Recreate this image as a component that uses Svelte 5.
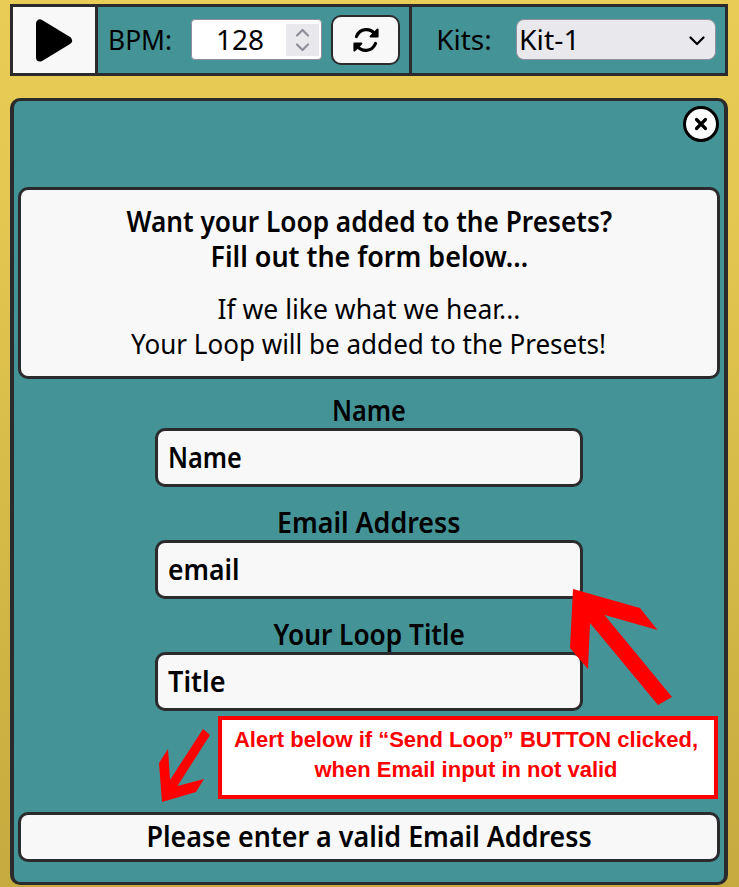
<script>
  const fields = [
    { label: 'Name', labelWidth: 74, value: 'Name', valueWidth: 74 },
    { label: 'Email Address', labelWidth: 183, value: 'email', valueWidth: 72 },
    { label: 'Your Loop Title', labelWidth: 191, value: 'Title', valueWidth: 58 }
  ];

  // Condenses a line of type horizontally to the given width.
  function fit(node, width) {
    node.style.transform = `scaleX(${width / node.offsetWidth})`;
  }
</script>

<main>
  <header>
    <button class="play" aria-label="Play">
      <svg width="82" height="66" viewBox="0 0 82 66"><path d="M27 16 V50 L55 33 Z" transform="translate(0 .5)" fill="#000" stroke="#000" stroke-width="8" stroke-linejoin="round" /></svg>
    </button>
    <div class="tempo">
      <div class="lab bpm"><span use:fit={64}>BPM:</span></div>
      <div class="number">
        <div class="digits"><span use:fit={48}>128</span></div>
        <div class="spin">
          <svg width="33" height="32" viewBox="0 0 33 32" fill="none" stroke="#8f8f9b" stroke-width="2.2" stroke-linecap="round" stroke-linejoin="round"><path d="M11 11.5 16.5 6 22 11.5M11 20.5 16.5 26 22 20.5" /></svg>
        </div>
      </div>
      <button class="reload" aria-label="Reset tempo">
        <svg width="28" height="26" viewBox="0 0 28 26" fill="none" stroke="#000" stroke-width="3.2" stroke-linecap="round" stroke-linejoin="round"><path d="M4.500 9.500C8 1 18 .5 23.500 7.500M23.500 16.500C20 25 10 25.500 4.500 18.500" /><path d="M25.600 2.500V9.500H18.600ZM2.400 23.500V16.500H9.400Z" fill="#000" stroke-width="2" /></svg>
      </button>
    </div>
    <div class="kits">
      <div class="lab"><span use:fit={56}>Kits:</span></div>
      <div class="select">
        <span use:fit={61}>Kit-1</span>
        <svg width="16" height="10" viewBox="0 0 16 10" fill="none" stroke="#000" stroke-width="2.2" stroke-linecap="round" stroke-linejoin="round"><path d="M1.500 1.500 8 8 14.500 1.500" /></svg>
      </div>
    </div>
  </header>

  <section class="panel">
    <button class="close" aria-label="Close">
      <svg width="14" height="14" viewBox="0 0 14 14" stroke="#000" stroke-width="3.2" stroke-linecap="round"><path d="M2.500 2.500 11.500 11.500M11.500 2.500 2.500 11.500" /></svg>
    </button>
    <div class="info">
      <h2><span use:fit={485}>Want your Loop added to the Presets?</span><span use:fit={318}>Fill out the form below...</span></h2>
      <p><span use:fit={303}>If we like what we hear...</span><span use:fit={475}>Your Loop will be added to the Presets!</span></p>
    </div>
    <form>
      {#each fields as f}
        <div class="field">
          <div class="label"><span use:fit={f.labelWidth}>{f.label}</span></div>
          <div class="input"><span use:fit={f.valueWidth}>{f.value}</span></div>
        </div>
      {/each}
    </form>
    <div class="alert"><span use:fit={445}>Please enter a valid Email Address</span></div>
  </section>

  <aside class="note">
    <div><span use:fit={464}>Alert below if “Send Loop” BUTTON clicked,</span></div>
    <div><span use:fit={303}>when Email input in not valid</span></div>
  </aside>
  <svg class="arrows" width="739" height="887" viewBox="0 0 739 887" fill="#f00">
    <path d="M573 589 640 608 657.500 630 604.500 615 672 697 658 705 590 623 588 669 570 648Z" />
    <path d="M203 729 210 735 177.500 786 204 779 196 792 162 802 159 763 168 749 170 780Z" />
  </svg>
</main>

<style>
  :global(body) { margin: 0; }
  * { box-sizing: border-box; }
  main {
    position: relative;
    width: 739px;
    height: 887px;
    overflow: hidden;
    padding: 4px 11px 0 10px;
    background: linear-gradient(#e9cc55, #e5c852 20%, #c5ab3d);
    font: 28px/35px "Noto Sans", sans-serif;
    color: #000;
  }
  span { display: inline-block; white-space: nowrap; }
  svg { display: block; }
  button { padding: 0; display: flex; align-items: center; justify-content: center; }
  header {
    display: flex;
    height: 72px;
    border: 3px solid #2b2b2e;
    background: #449497;
  }
  .play { width: 85px; height: 66px; border: 0; border-right: 3px solid #2b2b2e; background: #f8f8f8; }
  .tempo { display: flex; align-items: center; width: 314px; padding-bottom: 1px; border-right: 3px solid #2b2b2e; }
  .lab { display: flex; justify-content: center; width: 54px; padding-bottom: 1px; }
  .bpm { width: 63px; margin: 0 19px 0 11px; }
  .number {
    display: flex;
    align-items: center;
    width: 131px;
    height: 41px;
    border: 1px solid #8f8f9d;
    border-radius: 4px;
    background: #fff;
  }
  .digits { width: 94px; padding: 0 0 1px 2px; display: flex; justify-content: center; }
  .spin { width: 33px; height: 32px; background: #e9e9ed; }
  .reload {
    width: 69px;
    height: 50px;
    margin: 1px 0 0 9px;
    border: 2px solid #2b2b2e;
    border-radius: 10px;
    background: #f8f8f8;
  }
  .kits { display: flex; align-items: center; flex: 1; padding: 0 0 1px 25px; }
  .select {
    display: flex;
    align-items: center;
    justify-content: space-between;
    width: 200px;
    height: 41px;
    margin-left: 25px;
    padding: 0 10px 0 2px;
    border: 1px solid #8f8f9d;
    border-radius: 8px;
    background: #e9e9ed;
  }
  .select span { padding-bottom: 1px; }
  .select svg { margin-top: 2px; }
  .select span, .input span { transform-origin: left; }
  .panel {
    display: flex;
    flex-direction: column;
    height: 787px;
    margin-top: 22px;
    padding: 5px 4px 0;
    border: solid #2b2b2e;
    border-width: 3px 4px;
    border-radius: 10px;
    background: #449497;
  }
  .close {
    align-self: flex-end;
    width: 36px;
    height: 36px;
    margin-right: 1px;
    border: 3px solid #000;
    border-radius: 50%;
    background: #fff;
  }
  .info {
    height: 192px;
    margin-top: 45px;
    padding-top: 14px;
    border: 3px solid #2b2b2e;
    border-radius: 10px;
    background: #f8f8f8;
  }
  h2, p {
    display: flex;
    flex-direction: column;
    align-items: center;
    margin: 0;
    font: inherit;
  }
  h2 { font-weight: 600; margin-bottom: 17px; }
  form { width: 428px; margin: 13px auto 0; font-weight: 600; }
  .field { height: 112px; }
  .label { display: flex; justify-content: center; height: 36px; padding-top: 1px; }
  .input {
    height: 59px;
    padding: 9px 10px 7px;
    border: 3px solid #2b2b2e;
    border-radius: 10px;
    background: #f8f8f8;
  }
  .alert {
    display: flex;
    justify-content: center;
    height: 50px;
    margin-top: 84px;
    padding-top: 4px;
    border: 3px solid #2b2b2e;
    border-radius: 10px;
    background: #f8f8f8;
    font-weight: 600;
  }
  .note {
    position: absolute;
    left: 218px;
    top: 716px;
    width: 500px;
    height: 83px;
    padding: 5px 4px 0 0;
    border: 4px solid #f00;
    background: #fff;
    color: #f00;
    font: bold 22px/30px "Liberation Sans", Arial, sans-serif;
  }
  .note div { display: flex; justify-content: center; }
  .arrows { position: absolute; left: 0; top: 0; }
</style>
